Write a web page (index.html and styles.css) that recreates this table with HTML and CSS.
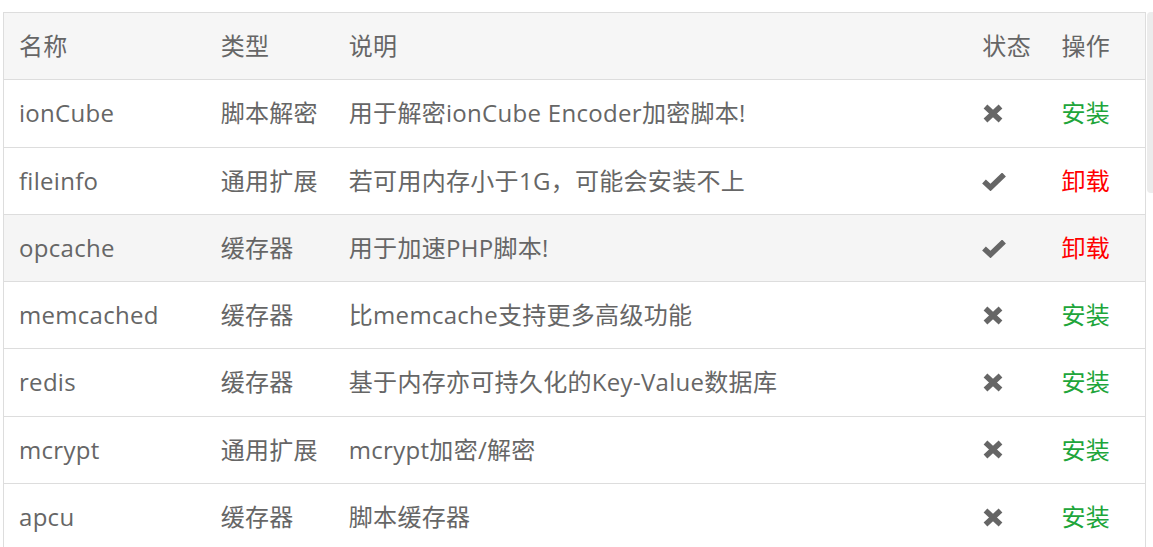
FILE: index.html
```html
<!DOCTYPE html>
<html lang="zh-CN">
<head>
<meta charset="utf-8">
<title>PHP扩展</title>
<link rel="stylesheet" href="styles.css">
</head>
<body>
<div class="wrap">
  <table class="ext-table">
    <colgroup>
      <col class="c-name"><col class="c-type"><col class="c-desc"><col class="c-status"><col class="c-op">
    </colgroup>
    <thead>
      <tr><th>名称</th><th>类型</th><th>说明</th><th>状态</th><th>操作</th></tr>
    </thead>
    <tbody>
      <tr><td>ionCube</td><td>脚本解密</td><td>用于解密ionCube Encoder加密脚本!</td><td><svg class="ico ico-x" viewBox="0 0 20 19"><path d="M2.5 2.5 L17.5 16.5 M17.5 2.5 L2.5 16.5"/></svg></td><td><a class="install">安装</a></td></tr>
      <tr><td>fileinfo</td><td>通用扩展</td><td>若可用内存小于1G，可能会安装不上</td><td><svg class="ico ico-ok" viewBox="0 0 24 18"><path d="M2 8.5 L8.5 14.5 L22 1.5"/></svg></td><td><a class="uninstall">卸载</a></td></tr>
      <tr class="hover"><td>opcache</td><td>缓存器</td><td>用于加速PHP脚本!</td><td><svg class="ico ico-ok" viewBox="0 0 24 18"><path d="M2 8.5 L8.5 14.5 L22 1.5"/></svg></td><td><a class="uninstall">卸载</a></td></tr>
      <tr><td>memcached</td><td>缓存器</td><td>比memcache支持更多高级功能</td><td><svg class="ico ico-x" viewBox="0 0 20 19"><path d="M2.5 2.5 L17.5 16.5 M17.5 2.5 L2.5 16.5"/></svg></td><td><a class="install">安装</a></td></tr>
      <tr><td>redis</td><td>缓存器</td><td>基于内存亦可持久化的Key-Value数据库</td><td><svg class="ico ico-x" viewBox="0 0 20 19"><path d="M2.5 2.5 L17.5 16.5 M17.5 2.5 L2.5 16.5"/></svg></td><td><a class="install">安装</a></td></tr>
      <tr><td>mcrypt</td><td>通用扩展</td><td>mcrypt加密/解密</td><td><svg class="ico ico-x" viewBox="0 0 20 19"><path d="M2.5 2.5 L17.5 16.5 M17.5 2.5 L2.5 16.5"/></svg></td><td><a class="install">安装</a></td></tr>
      <tr><td>apcu</td><td>缓存器</td><td>脚本缓存器</td><td><svg class="ico ico-x" viewBox="0 0 20 19"><path d="M2.5 2.5 L17.5 16.5 M17.5 2.5 L2.5 16.5"/></svg></td><td><a class="install">安装</a></td></tr>
    </tbody>
  </table>
</div>
<div class="scroll-thumb"></div>
</body>
</html>
```
FILE: styles.css
```css
html, body {
  margin: 0;
  padding: 0;
  background: #fff;
  overflow: hidden;
}
body {
  font-family: "Open Sans", "Noto Sans CJK SC", sans-serif;
  font-size: 24px;
  letter-spacing: 0.3px;
  color: #666;
}
.wrap {
  padding: 12px 0 0 3px;
}
.ext-table {
  width: 1143px;
  border-collapse: collapse;
  table-layout: fixed;
  border: 1px solid #ddd;
}
.c-name { width: 202px; }
.c-type { width: 128px; }
.c-desc { width: 633px; }
.c-status { width: 79px; }
.c-op { width: 99px; }
.ext-table th,
.ext-table td {
  padding: 16px 15px;
  line-height: 34.3px;
  text-align: left;
  font-weight: normal;
  border-top: 1px solid #ddd;
  white-space: nowrap;
  vertical-align: middle;
}
.ext-table thead tr {
  background: #f6f6f6;
}
.ext-table tr.hover {
  background: #f5f5f5;
}
.ico {
  display: block;
}
.ico-x {
  width: 20px;
  height: 19px;
  margin-left: 1px;
}
.ico-ok {
  width: 24px;
  height: 18px;
  margin-top: 2px;
}
.ico path {
  fill: none;
  stroke: #666;
  stroke-width: 5.5;
  stroke-linejoin: miter;
  stroke-linecap: butt;
}
.install { color: #20a53a; }
.uninstall { color: #ff0000; }
.scroll-thumb {
  position: absolute;
  left: 1147px;
  top: 12px;
  width: 6px;
  height: 181px;
  background: #ececec;
  border-radius: 4px 0 0 4px;
}
```
